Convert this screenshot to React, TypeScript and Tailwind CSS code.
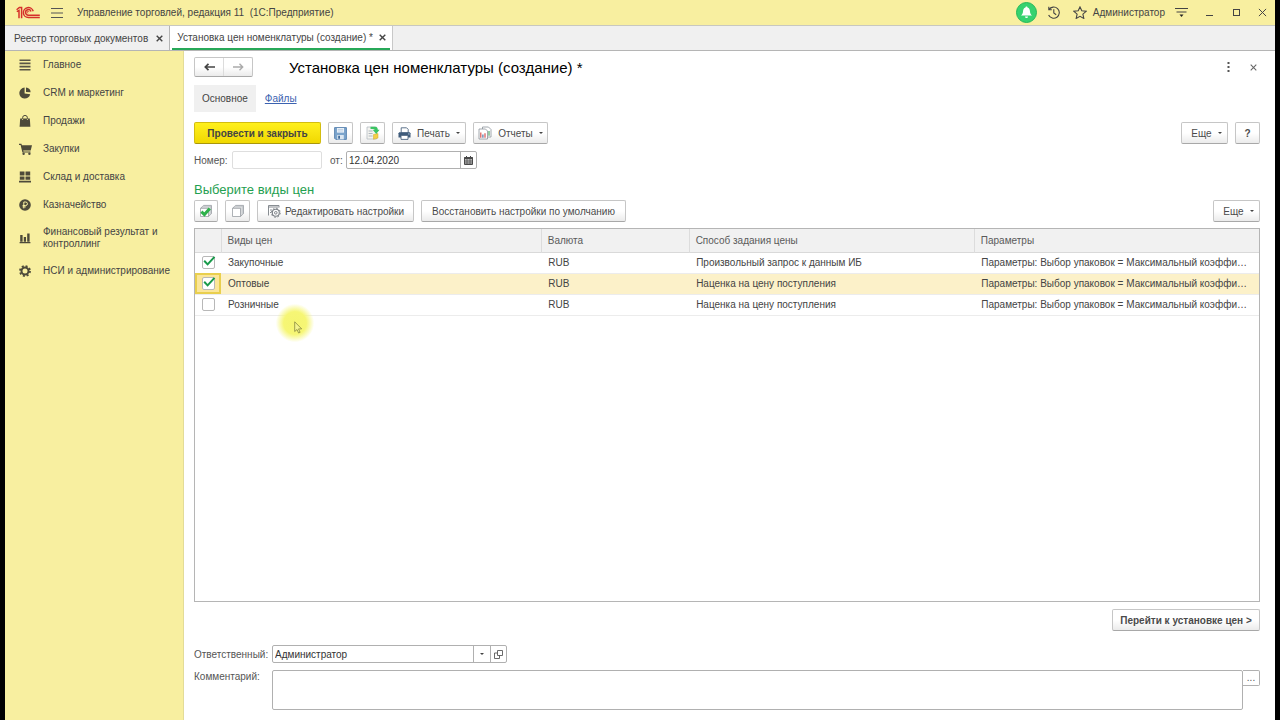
import { useState } from "react"
import type { ReactNode } from "react"
import clsx from "clsx"

const sections = [
  { label: "Главное", icon: <ListIcon /> },
  { label: "CRM и маркетинг", icon: <PieIcon /> },
  { label: "Продажи", icon: <BagIcon /> },
  { label: "Закупки", icon: <CartIcon /> },
  { label: "Склад и доставка", icon: <StockIcon /> },
  { label: "Казначейство", icon: <RubleIcon /> },
  { label: "Финансовый результат и контроллинг", icon: <BarsIcon /> },
  { label: "НСИ и администрирование", icon: <GearIcon /> },
]

const params = "Параметры: Выбор упаковок = Максимальный коэффи…"

const priceTypes = [
  { name: "Закупочные", currency: "RUB", method: "Произвольный запрос к данным ИБ", checked: true },
  { name: "Оптовые", currency: "RUB", method: "Наценка на цену поступления", checked: true },
  { name: "Розничные", currency: "RUB", method: "Наценка на цену поступления", checked: false },
]

/* ---------- section icons ---------- */

function ListIcon() {
  return (
    <svg width="12" height="12" viewBox="0 0 12 12" stroke="#5a5646" strokeWidth="1.6">
      <path d="M0.500 1.200h11M0.500 4.400h11M0.500 7.600h11M0.500 10.800h11" />
    </svg>
  )
}

function PieIcon() {
  return (
    <svg width="12" height="12" viewBox="0 0 12 12" fill="#4d4a3a">
      <path d="M5.6 0.6A5.5 5.5 0 1 0 11.2 7.2L5.6 6.4z" />
      <path d="M7 0.4A5 5 0 0 1 11.6 5.2L7 5z" />
    </svg>
  )
}

function BagIcon() {
  return (
    <svg width="12" height="12" viewBox="0 0 12 12" fill="#4d4a3a">
      <path d="M1.2 3.6h9.6l.6 8.2H.6z" />
      <path d="M3.6 5V2.8a2.4 2.4 0 0 1 4.8 0V5" fill="none" stroke="#4d4a3a" strokeWidth="1" />
      <path d="M3.6 3.8V5M8.4 3.8V5" stroke="#f8efa0" strokeWidth="0.8" />
    </svg>
  )
}

function CartIcon() {
  return (
    <svg width="13" height="12" viewBox="0 0 13 12" fill="#4d4a3a">
      <path d="M0 .8h2.4l.5 1.4H13l-1.3 5.2H4.2l.3 1h7v1H3.4L1.6 1.9H0z" />
      <circle cx="4.6" cy="10.8" r="1.2" />
      <circle cx="10.4" cy="10.8" r="1.2" />
    </svg>
  )
}

function StockIcon() {
  return (
    <svg width="12" height="12" viewBox="0 0 12 12" fill="#4d4a3a">
      <path d="M.8.6h4.7v4H.8zM6.5.6h4.7v4H6.5zM.8 5.4h4.7v3.4H.8zM6.5 5.4h4.7v3.4H6.5zM0 9.8h12v1.8H0z" />
    </svg>
  )
}

function RubleIcon() {
  return (
    <svg width="12" height="12" viewBox="0 0 12 12">
      <circle cx="6" cy="6" r="5.8" fill="#4d4a3a" />
      <path d="M4.8 9.4V3h1.9a1.7 1.7 0 0 1 0 3.5H3.6M3.6 7.9h3.2" fill="none" stroke="#f8efa0" strokeWidth="1" />
    </svg>
  )
}

function BarsIcon() {
  return (
    <svg width="12" height="12" viewBox="0 0 12 12" fill="#4d4a3a">
      <path d="M1.200 3h2.400v6.800H1.200zM4.800 5h2.200v4.800H4.800zM8.200 1.600h2.400v8.200H8.200zM.6 10h10.800v1.300H.6z" />
    </svg>
  )
}

function GearIcon() {
  return (
    <svg width="12" height="12" viewBox="0 0 12 12" fill="none" stroke="#4d4a3a">
      <circle cx="6" cy="6" r="3.500" strokeWidth="2" />
      <circle cx="6" cy="6" r="5" strokeWidth="1.800" strokeDasharray="2 1.930" />
    </svg>
  )
}

/* ---------- toolbar icons ---------- */

function Logo() {
  return (
    <svg width="24" height="13" viewBox="0 0 24 13" fill="none" stroke="#d5302b" strokeWidth="1.500">
      <path d="M.6 3.800L3.400 1.400h2.200V12.200M.8 5.600l2.200-1.200V12.200" />
      <path d="M17.200 5.200A5 5 0 1 0 12.400 11.600H23.800" />
      <path d="M15 5.400A2.800 2.800 0 1 0 12.400 9.200H23.800" />
      <path d="M13.200 6.200a1 1 0 1 0-.9 1" strokeWidth="0.800" />
    </svg>
  )
}

function SaveIcon() {
  return (
    <svg width="13" height="13" viewBox="0 0 13 13">
      <path d="M.6.6h11.8v11.8H1.8L.6 11.2z" fill="#7ba4cc" stroke="#5f88b3" />
      <path d="M3 1h7v4.6H3z" fill="#eef4fa" />
      <path d="M3.8 2.4h5.4M3.8 4h5.4" stroke="#a9c1da" strokeWidth="0.7" />
      <path d="M3.2 8h6.6v4.4H3.2z" fill="#dbe6f1" />
      <path d="M4.2 8.8h1.8v3H4.2z" fill="#3f6a99" />
    </svg>
  )
}

function PostIcon() {
  return (
    <svg width="14" height="14" viewBox="0 0 14 14">
      <path d="M1 1h9.5v12H1z" fill="#f4f4f0" stroke="#b5bcc3" strokeWidth="0.8" />
      <path d="M2.6 5h4M2.6 7.5h4M2.6 10h4" stroke="#a5afb9" strokeWidth="0.9" />
      <path d="M7.500 8.500l4.500-1v4.600l-4.500 1.200z" fill="#f3cf45" stroke="#d2a92a" strokeWidth="0.500" />
      <path d="M4.500.8h4.300c2.200 0 3 1.200 3 3h1.800L10.200 8 6.700 3.800h1.900c0-.5-.3-.8-1-.8H4.500z" fill="#3cc463" />
    </svg>
  )
}

function PrintIcon() {
  return (
    <svg width="13" height="13" viewBox="0 0 13 13">
      <path d="M3.200.8h5.400l1.600 1.600V6H3.200z" fill="#fff" stroke="#4d6480" strokeWidth="0.9" />
      <path d="M1.200 5.200h10.600l.7 1v4.200H.5V6.200z" fill="#3f5b7b" />
      <path d="M3 8.400h7v4H3z" fill="#fff" stroke="#4d6480" strokeWidth="0.9" />
      <circle cx="10.900" cy="6.900" r=".6" fill="#cfe0f0" />
    </svg>
  )
}

function ReportIcon() {
  return (
    <svg width="14" height="14" viewBox="0 0 14 14" fill="none">
      <path d="M4.500 1h6l2.500 2.500V11H4.500z" fill="#fff" stroke="#8b939b" strokeWidth="0.8" />
      <path d="M1 3h6.500l2 2v8H1z" fill="#fff" stroke="#8b939b" strokeWidth="0.8" />
      <path d="M2.800 11.800V6.500" stroke="#d9534f" strokeWidth="1.200" />
      <path d="M4.900 11.800V8.500" stroke="#4a76a5" strokeWidth="1.200" />
      <path d="M7 11.800V7.300" stroke="#d9534f" strokeWidth="1.200" />
      <path d="M11 9.800V5" stroke="#4fa866" strokeWidth="1.200" />
    </svg>
  )
}

function StackIcon({ checked }: { checked?: boolean }) {
  return (
    <svg width="14" height="14" viewBox="0 0 14 14" stroke="#9a9fa4" strokeWidth="0.8">
      <path d="M1.500 4.300L4.600 1.400h7.900v8.200l-3 2.900z" fill="#c3c7cb" />
      <path d="M3.200 3.200h7.600v7.600" fill="none" stroke="#f2f2f2" strokeWidth="0.600" />
      <path d="M1.500 4.300h8v8.200h-8z" fill="#fff" />
      {checked && <path d="M2.400 7.600l3 3L10.800 4.400" fill="none" stroke="#2fb14b" strokeWidth="3" />}
    </svg>
  )
}

function SettingsIcon() {
  return (
    <svg width="14" height="14" viewBox="0 0 14 14" fill="none" stroke="#7b8086">
      <path d="M1.500 11.500V1.500h10.500v2M1.500 3h10" strokeWidth="0.900" />
      <path d="M3 6h2M3 8.500h1" strokeWidth="0.900" />
      <circle cx="8.800" cy="8.800" r="3.500" strokeWidth="1.100" fill="#fff" />
      <circle cx="8.800" cy="8.800" r="4.500" strokeWidth="1" strokeDasharray="1.600 1.900" />
      <circle cx="8.800" cy="8.800" r="1.300" strokeWidth="1" />
    </svg>
  )
}

function CalendarIcon() {
  return (
    <svg width="9" height="9" viewBox="0 0 9 9">
      <path d="M.5 1.500h8v7h-8z" fill="#bbb" stroke="#4a4a4a" />
      <path d="M.5 1h8v2h-8zM2 0h1v1H2zM6 0h1v1H6z" fill="#4a4a4a" />
      <path d="M1 5h7M1 7h7M3 3v5.500M6 3v5.500" stroke="#4a4a4a" strokeWidth="0.700" />
    </svg>
  )
}

function OpenIcon() {
  return (
    <svg width="9" height="9" viewBox="0 0 9 9" fill="none" stroke="#5a5a5a" strokeWidth="0.900">
      <path d="M3.500.5h5v5h-5z" />
      <path d="M3.500 3H.5v5.500h5v-3" />
    </svg>
  )
}

function Caret() {
  return <span className="h-0 w-0 border-x-2 border-t-2 border-x-transparent border-t-[#444]" />
}

function CloseIcon({ size, width }: { size: number; width: number }) {
  return (
    <svg width={size} height={size} viewBox="0 0 10 10" fill="none" stroke="currentColor" strokeWidth={width}>
      <path d="M1 1l8 8M9 1L1 9" />
    </svg>
  )
}

/* ---------- controls ---------- */

function Button({ children, className, label }: { children: ReactNode; className?: string; label?: string }) {
  return (
    <button
      type="button"
      aria-label={label}
      className={clsx(
        "flex h-[22px] items-center justify-center rounded-xs border border-[#c6c6c6] border-b-[#a8a8a8] bg-linear-to-b from-white from-50% to-[#ebebeb] whitespace-nowrap text-[#4a4a4a]",
        className,
      )}
    >
      {children}
    </button>
  )
}

function TitleBar() {
  return (
    <header className="flex h-[25px] shrink-0 items-center bg-[#f8efa0] pr-2 pl-[11px] text-[#444]">
      <Logo />
      <button type="button" aria-label="Меню функций" className="ml-[11px]">
        <svg width="12" height="10" viewBox="0 0 12 10" stroke="#555" strokeWidth="1">
          <path d="M0 .5h12M0 5h12M0 9.500h12" />
        </svg>
      </button>
      <span className="ml-[14px] whitespace-pre">Управление торговлей, редакция 11  (1С:Предприятие)</span>
      <div className="ml-auto flex items-center">
        <button
          type="button"
          aria-label="Уведомления"
          className="flex h-[21px] w-[21px] items-center justify-center rounded-full border border-[#25b858] bg-[#36d26f]"
        >
          <svg width="13" height="13" viewBox="0 0 13 13" fill="#fff">
            <path d="M6.500.5c.7 0 1 .4 1 1C9.300 2 9.900 3.600 10 5.500c.1 2 .8 2.800 2 4H1c1.200-1.200 1.900-2 2-4 .1-1.900.7-3.500 2.500-4 0-.6.3-1 1-1zM5 10.500h3a1.500 1.500 0 0 1-3 0z" />
          </svg>
        </button>
        <button type="button" aria-label="История" className="ml-[10px]">
          <svg width="13" height="13" viewBox="0 0 13 13" fill="none" stroke="#444" strokeWidth="1.100">
            <path d="M2 3.600A5.600 5.600 0 1 1 1.600 9M1.800.8v3h3M6.800 3.200V7l2.400 1.800" />
          </svg>
        </button>
        <button type="button" aria-label="Избранное" className="ml-[13px]">
          <svg width="14" height="13" viewBox="0 0 14 13" fill="none" stroke="#444" strokeWidth="1.100">
            <path d="M7 .9l1.800 3.900 4.300.5-3.200 2.900.9 4.200L7 10.300l-3.800 2.100.9-4.200L.9 5.300l4.300-.5z" />
          </svg>
        </button>
        <span className="ml-1.5">Администратор</span>
        <button type="button" aria-label="Настройка" className="ml-[10px]">
          <svg width="13" height="11" viewBox="0 0 13 11" stroke="#444" strokeWidth="1.100">
            <path d="M0 1.500h13M1.500 5h10" />
            <path d="M4.500 7.500h4l-2 2.500z" fill="#222" stroke="none" />
          </svg>
        </button>
        <button type="button" aria-label="Свернуть" className="ml-[18px]">
          <svg width="7" height="9" viewBox="0 0 7 9" stroke="#444">
            <path d="M0 7.500h7" />
          </svg>
        </button>
        <button type="button" aria-label="Развернуть" className="ml-[20px]">
          <span className="block h-[7px] w-[7px] border border-[#444]" />
        </button>
        <button type="button" aria-label="Закрыть" className="ml-[18px]">
          <CloseIcon size={9} width={1.1} />
        </button>
      </div>
    </header>
  )
}

function WindowTabs() {
  return (
    <nav className="flex h-[26px] shrink-0 border-y border-[#c8c8c0] border-b-[#b5b5b5] bg-[#f0f0f0] text-[#444]">
      <div className="flex items-center gap-2 border-r border-[#b5b5b5] pr-1.5 pl-[9px]">
        <a href="#registry">Реестр торговых документов</a>
        <button type="button" aria-label="Закрыть вкладку">
          <CloseIcon size={7} width={2} />
        </button>
      </div>
      <div className="flex border-r border-[#c8c8c8] bg-white px-0.5">
        <div className="flex items-center gap-1.5 border-b-2 border-[#27a858] pr-1 pl-[5px]">
          <a href="#prices">Установка цен номенклатуры (создание) *</a>
          <button type="button" aria-label="Закрыть вкладку">
            <CloseIcon size={7} width={2} />
          </button>
        </div>
      </div>
    </nav>
  )
}

function Sidebar() {
  return (
    <aside className="w-[179px] shrink-0 border-r border-[#e3dc98] bg-[#f8efa0] text-[#444]">
      <ul className="flex flex-col gap-2 pt-1">
        {sections.map((s) => (
          <li key={s.label}>
            <a href="#section" className="flex min-h-5 items-center py-[3px] pl-[14px] leading-3">
              <span className="flex w-[24px] shrink-0">{s.icon}</span>
              <span className="pr-2">{s.label}</span>
            </a>
          </li>
        ))}
      </ul>
    </aside>
  )
}

function PriceTable() {
  const [rows, setRows] = useState(priceTypes)
  const current = 1

  const toggle = (index: number) => {
    setRows(rows.map((r, i) => (i === index ? { ...r, checked: !r.checked } : r)))
  }

  return (
    <div className="relative mt-[6px] min-h-[200px] flex-1 border border-[#b5b5b5]">
      <table className="w-full table-fixed border-collapse text-left">
        <colgroup>
          <col className="w-[26px]" />
          <col className="w-[30.1%]" />
          <col className="w-[13.9%]" />
          <col className="w-[26.8%]" />
          <col />
        </colgroup>
        <thead>
          <tr className="h-[23px] border-b border-[#d9d9d9] bg-[#f1f1f1] text-[#5a5a5a]">
            <th aria-label="Выбор" />
            {["Виды цен", "Валюта", "Способ задания цены", "Параметры"].map((h) => (
              <th key={h} className="border-l border-[#dcdcdc] px-1.5 font-normal">
                {h}
              </th>
            ))}
          </tr>
        </thead>
        <tbody className="text-[#444]">
          {rows.map((r, i) => (
            <tr key={r.name} className={clsx("border-b border-[#ececec]", i === current && "bg-[#fcf1c9]")}>
              <td className={clsx("h-[21px] p-0", i === current && "bg-[#fbe69a] outline-2 -outline-offset-2 outline-[#e9cf4e]")}>
                <label className="relative ml-[7px] block h-[13px] w-[13px]">
                  <input
                    type="checkbox"
                    aria-label={r.name}
                    checked={r.checked}
                    onChange={() => toggle(i)}
                    className="block h-[13px] w-[13px] appearance-none rounded-xs border border-[#b8b8b8] bg-white"
                  />
                  {r.checked && (
                    <svg className="absolute top-0 left-px" width="13" height="11" viewBox="0 0 13 11" fill="none">
                      <path d="M1.200 4.800l3.400 3.600L11.500.8" stroke="#189a4a" strokeWidth="2" />
                    </svg>
                  )}
                </label>
              </td>
              <td className="px-[7px] py-0">{r.name}</td>
              <td className="px-[7px] py-0">{r.currency}</td>
              <td className="px-[7px] py-0">{r.method}</td>
              <td className="truncate px-[7px] py-0">{params}</td>
            </tr>
          ))}
        </tbody>
      </table>

      {/* mouse pointer with its highlight */}
      <div className="pointer-events-none absolute top-[74px] left-[80px] h-10 w-10 rounded-full bg-[radial-gradient(circle,#f5f571_0%,#f6f675_40%,#f8f89000_68%)]">
        <svg className="absolute top-[18px] left-[19px]" width="9" height="13" viewBox="0 0 9 13">
          <path d="M.7.8v9.700l2.300-2 1.600 3.500 1.500-.7-1.600-3.400h3.200z" fill="#f4f48e" stroke="#88883f" strokeWidth="0.800" />
        </svg>
      </div>
    </div>
  )
}

function PriceForm() {
  return (
    <main className="flex min-w-0 flex-1 flex-col bg-white pt-1.5 pr-[15px] pb-[10px] pl-[10px]">
      <div className="flex h-5 items-center">
        <div className="flex h-5 rounded-xs border border-[#c6c6c6] border-b-[#a8a8a8] bg-linear-to-b from-white from-50% to-[#ebebeb]">
          <button type="button" aria-label="Назад" className="flex w-[29px] items-center justify-center border-r border-[#dcdcdc]">
            <svg width="11" height="8" viewBox="0 0 11 8" fill="none" stroke="#444" strokeWidth="1.700">
              <path d="M11 4H1.500M4.500.8L1.300 4l3.200 3.200" />
            </svg>
          </button>
          <button type="button" aria-label="Вперед" className="flex w-[28px] items-center justify-center">
            <svg width="11" height="8" viewBox="0 0 11 8" fill="none" stroke="#aaa" strokeWidth="1.400">
              <path d="M0 4h9.500M6.500.8L9.700 4 6.500 7.200" />
            </svg>
          </button>
        </div>
        <h1 className="ml-9 text-[15px] text-black">Установка цен номенклатуры (создание) *</h1>
        <div className="ml-auto flex items-center gap-5 pr-[3px] text-[#666]">
          <button type="button" aria-label="Еще">
            <svg width="3" height="10" viewBox="0 0 3 10" fill="#555">
              <path d="M.5 0h2v2h-2zM.5 4h2v2h-2zM.5 8h2v2h-2z" />
            </svg>
          </button>
          <button type="button" aria-label="Закрыть">
            <CloseIcon size={7} width={1.5} />
          </button>
        </div>
      </div>

      <div className="mt-2 flex h-[27px] items-center gap-[9px]">
        <a href="#main" className="flex h-full items-center bg-[#f0f0f0] px-2 text-[#444]">Основное</a>
        <a href="#files" className="text-[#3b62b0] underline">Файлы</a>
      </div>

      <div className="mt-[10px] flex gap-[7px]">
        <button
          type="button"
          className="h-[22px] w-[127px] rounded-xs border border-[#d3bd10] border-b-[#a8960c] bg-linear-to-b from-[#fff01c] to-[#f0d800] font-bold text-[#444]"
        >
          Провести и закрыть
        </button>
        <Button label="Записать" className="w-[25px]"><SaveIcon /></Button>
        <Button label="Провести" className="w-[25px]"><PostIcon /></Button>
        <Button className="w-[74px] gap-1.5"><PrintIcon />Печать<Caret /></Button>
        <Button className="w-[75px] gap-1.5"><ReportIcon />Отчеты<Caret /></Button>
        <Button className="ml-auto w-[47px] gap-1.5 pl-1">Еще<Caret /></Button>
        <Button label="Справка" className="w-[25px] font-bold">?</Button>
      </div>

      <div className="mt-[7px] flex h-[18px] items-center text-[#555]">
        <label htmlFor="number" className="w-[38px]">Номер:</label>
        <input id="number" className="h-[18px] w-[90px] rounded-xs border border-[#dedede] px-0.5" />
        <label htmlFor="date" className="ml-2 w-4">от:</label>
        <div className="flex h-[18px] w-[131px] rounded-xs border border-[#b0b0b0]">
          <input id="date" defaultValue="12.04.2020" className="min-w-0 flex-1 px-0.5 text-[#333] outline-none" />
          <button type="button" aria-label="Выбрать дату" className="flex w-4 items-center justify-center border-l border-[#b0b0b0]">
            <CalendarIcon />
          </button>
        </div>
      </div>

      <h2 className="mt-[13px] text-[13px] leading-4 text-[#1fa050]">Выберите виды цен</h2>
      <div className="mt-0.5 flex gap-[7px]">
        <Button label="Установить флажки" className="w-[24px]"><StackIcon checked /></Button>
        <Button label="Снять флажки" className="w-[25px]"><StackIcon /></Button>
        <Button className="w-[157px] gap-1"><SettingsIcon />Редактировать настройки</Button>
        <Button className="w-[205px]">Восстановить настройки по умолчанию</Button>
        <Button className="ml-auto w-[47px] gap-1.5 pl-1">Еще<Caret /></Button>
      </div>

      <PriceTable />

      <Button className="mt-[7px] w-[148px] self-end font-bold">Перейти к установке цен &gt;</Button>

      <div className="mt-[14px] flex h-[18px] items-center text-[#555]">
        <label htmlFor="owner" className="w-[78px]">Ответственный:</label>
        <div className="flex h-[18px] w-[235px] rounded-xs border border-[#b0b0b0]">
          <input id="owner" defaultValue="Администратор" className="min-w-0 flex-1 px-0.5 text-[#333] outline-none" />
          <button type="button" aria-label="Выбрать" className="flex w-[17px] items-center justify-center border-l border-[#b0b0b0]">
            <Caret />
          </button>
          <button type="button" aria-label="Открыть" className="flex w-4 items-center justify-center border-l border-[#b0b0b0]">
            <OpenIcon />
          </button>
        </div>
      </div>

      <div className="mt-[7px] flex items-start text-[#555]">
        <label htmlFor="comment" className="w-[78px]">Комментарий:</label>
        <textarea id="comment" className="block h-10 flex-1 resize-none rounded-xs border border-[#b0b0b0] px-0.5 outline-none" />
        <button type="button" aria-label="Редактировать комментарий" className="h-4 w-[17px] rounded-r-xs border border-l-0 border-[#b0b0b0] leading-3">
          ...
        </button>
      </div>
    </main>
  )
}

export default function App() {
  return (
    <div className="flex min-h-screen flex-col bg-black px-[5px] font-['Liberation_Sans',Arial,sans-serif] text-[10px] leading-[13px]">
      <TitleBar />
      <WindowTabs />
      <div className="flex flex-1">
        <Sidebar />
        <PriceForm />
      </div>
    </div>
  )
}
